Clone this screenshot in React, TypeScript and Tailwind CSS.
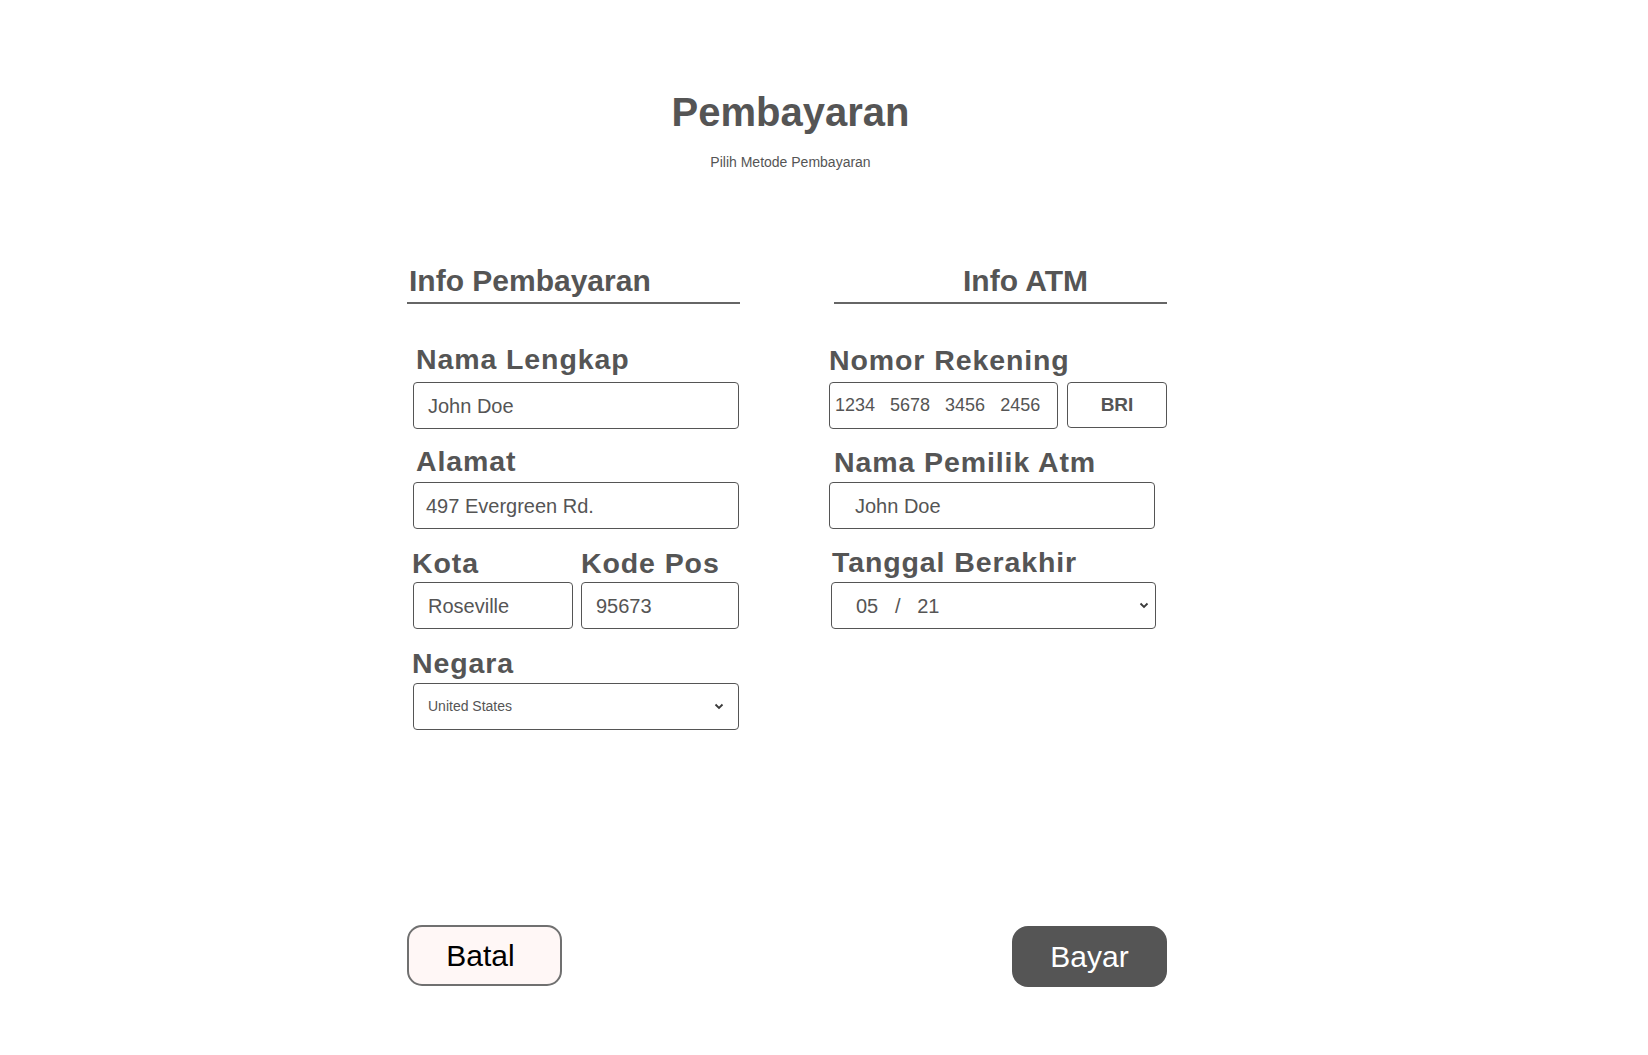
const label = "block text-[28.5px] leading-[28px] font-bold tracking-[0.9px] text-[#555]";
const box = "flex h-[47px] items-center rounded-[4px] border border-[#555] bg-white text-[#555]";

function Chevron() {
	return (
		<svg width="10" height="7" viewBox="0 0 10 7" className="shrink-0">
			<path d="M1.5 1.5l3.5 3.5 3.5-3.5" fill="none" stroke="#3a3a3a" strokeWidth="1.8" />
		</svg>
	);
}

export default function App() {
	return (
		<div className="min-h-screen bg-white font-['Liberation_Sans',Arial,sans-serif] pt-[92px]">
			<div className="ml-[407px] w-[760px]">
				{/* header */}
				<div className="pl-[7px] text-center text-[#555]">
					<h1 className="text-[40px] leading-[40px] font-bold">Pembayaran</h1>
					<p className="mt-[22px] text-[14px] leading-[16px]">Pilih Metode Pembayaran</p>
				</div>

				<div className="mt-[96px] flex gap-[89px]">
					{/* left column */}
					<div className="w-[333px]">
						<h2 className="border-b-2 border-[#666] pb-[6px] pl-[2px] text-[30px] leading-[30px] font-bold text-[#555]">
							Info Pembayaran
						</h2>

						<span className={`${label} mt-[41px] pl-[9px]`}>Nama Lengkap</span>
						<div className={`${box} mt-[9px] ml-[6px] w-[326px] pl-[14px] text-[20px]`}>John Doe</div>

						<span className={`${label} mt-[18px] pl-[9px]`}>Alamat</span>
						<div className={`${box} mt-[7px] ml-[6px] w-[326px] pl-[12px] text-[20px]`}>497 Evergreen Rd.</div>

						<div className="mt-[20px] ml-[5px] flex gap-[8px]">
							<div className="w-[161px]">
								<span className={label}>Kota</span>
								<div className={`${box} mt-[5px] ml-[1px] w-[160px] pl-[14px] text-[20px]`}>Roseville</div>
							</div>
							<div className="w-[158px]">
								<span className={label}>Kode Pos</span>
								<div className={`${box} mt-[5px] w-[158px] pl-[14px] text-[20px]`}>95673</div>
							</div>
						</div>

						<span className={`${label} mt-[20px] pl-[5px]`}>Negara</span>
						<div className={`${box} mt-[6px] ml-[6px] w-[326px] justify-between pl-[14px] pr-[14px] text-[14px]`}>
							<span>United States</span>
							<Chevron />
						</div>
					</div>

					{/* right column */}
					<div className="w-[338px]">
						<h2 className="ml-[5px] w-[333px] border-b-2 border-[#666] pb-[6px] pl-[129px] text-[30px] leading-[30px] font-bold text-[#555]">
							Info ATM
						</h2>

						<span className={`${label} mt-[42px]`}>Nomor Rekening</span>
						<div className="mt-[8px] flex gap-[9px]">
							<div className={`${box} w-[229px] whitespace-pre pl-[5px] text-[18px]`}>
								1234   5678   3456   2456
							</div>
							<button className="h-[46px] w-[100px] rounded-[4px] border border-[#555] bg-white text-[19px] font-bold text-[#555]">
								BRI
							</button>
						</div>

						<span className={`${label} mt-[19px] pl-[5px]`}>Nama Pemilik Atm</span>
						<div className={`${box} mt-[6px] w-[326px] pl-[25px] text-[20px]`}>John Doe</div>

						<span className={`${label} mt-[19px] pl-[3px]`}>Tanggal Berakhir</span>
						<div className={`${box} mt-[6px] ml-[2px] w-[325px] justify-between pl-[24px] pr-[6px] text-[20px]`}>
							<span className="whitespace-pre">05   /   21</span>
							<Chevron />
						</div>
					</div>
				</div>

				{/* actions */}
				<div className="mt-[195px] flex justify-between">
					<button className="h-[61px] w-[155px] rounded-[15px] border-2 border-[#707070] bg-[#fff7f6] pr-[8px] text-[30px] text-black">
						Batal
					</button>
					<button className="mt-[1px] h-[61px] w-[155px] rounded-[16px] bg-[#555] text-[30px] text-white">
						Bayar
					</button>
				</div>
			</div>
		</div>
	);
}
